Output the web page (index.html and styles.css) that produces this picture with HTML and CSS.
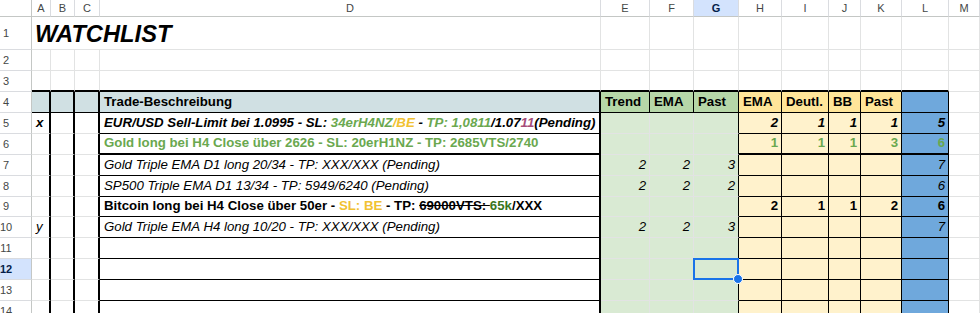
FILE: index.html
```html
<!DOCTYPE html>
<html lang="de">
<head>
<meta charset="utf-8">
<title>Watchlist</title>
<link rel="stylesheet" href="styles.css">
</head>
<body>
<div class="sheet">
  <!-- column headers -->
  <div class="x ch corner"></div>
  <div class="x ch">A</div><div class="x ch">B</div><div class="x ch">C</div><div class="x ch">D</div>
  <div class="x ch">E</div><div class="x ch">F</div><div class="x ch chsel">G</div><div class="x ch">H</div>
  <div class="x ch">I</div><div class="x ch">J</div><div class="x ch">K</div><div class="x ch">L</div><div class="x ch">M</div>

  <!-- row 1 -->
  <div class="x rh">1</div>
  <div class="x title">WATCHLIST</div>
  <div class="x"></div><div class="x"></div><div class="x"></div><div class="x"></div><div class="x"></div>
  <div class="x"></div><div class="x"></div><div class="x"></div><div class="x"></div>

  <!-- row 2 -->
  <div class="x rh">2</div>
  <div class="x"></div><div class="x"></div><div class="x"></div><div class="x"></div><div class="x"></div><div class="x"></div>
  <div class="x"></div><div class="x"></div><div class="x"></div><div class="x"></div><div class="x"></div><div class="x"></div><div class="x"></div>

  <!-- row 3 -->
  <div class="x rh">3</div>
  <div class="x top"></div><div class="x top"></div><div class="x top"></div><div class="x top"></div><div class="x top"></div><div class="x top"></div>
  <div class="x top"></div><div class="x top"></div><div class="x top"></div><div class="x top"></div><div class="x top"></div><div class="x top"></div><div class="x"></div>

  <!-- row 4 -->
  <div class="x rh">4</div>
  <div class="x hd hc ac"></div><div class="x hd hc ac"></div><div class="x hd hc ac"></div>
  <div class="x hd hc d">Trade-Beschreibung</div>
  <div class="x hd hg">Trend</div><div class="x hd hg">EMA</div><div class="x hd hg">Past</div>
  <div class="x hd hy">EMA</div><div class="x hd hy">Deutl.</div><div class="x hd hy">BB</div><div class="x hd hy">Past</div>
  <div class="x hd bl"></div>
  <div class="x"></div>

  <!-- row 5 -->
  <div class="x rh">5</div>
  <div class="x ac bi">x</div><div class="x ac"></div><div class="x ac"></div>
  <div class="x d bi"><span>EUR/USD Sell-Limit bei 1.0995 - SL:&nbsp;</span><span class="gn">34erH4NZ</span><span class="or">/BE</span><span>&nbsp;-&nbsp;</span><span class="gn">TP: 1,0811</span><span>/1.07</span><span class="pu">11</span><span>(Pending)</span></div>
  <div class="x gr"></div><div class="x gr"></div><div class="x gr gk"></div>
  <div class="x yl n bi">2</div><div class="x yl n bi">1</div><div class="x yl n bi">1</div><div class="x yl n bi">1</div>
  <div class="x bl n bi">5</div>
  <div class="x"></div>

  <!-- row 6 -->
  <div class="x rh">6</div>
  <div class="x ac"></div><div class="x ac"></div><div class="x ac"></div>
  <div class="x d b2 b gn">Gold long bei H4 Close über 2626 - SL: 20erH1NZ - TP: 2685VTS/2740</div>
  <div class="x gr"></div><div class="x gr"></div><div class="x gr gk"></div>
  <div class="x yl b2 n b gn">1</div><div class="x yl b2 n b gn">1</div><div class="x yl b2 n b gn">1</div><div class="x yl b2 n b gn">3</div>
  <div class="x bl b2 n b gn">6</div>
  <div class="x"></div>

  <!-- row 7 -->
  <div class="x rh">7</div>
  <div class="x ac"></div><div class="x ac"></div><div class="x ac"></div>
  <div class="x d i">Gold Triple EMA D1 long 20/34 - TP: XXX/XXX (Pending)</div>
  <div class="x gr n i">2</div><div class="x gr n i">2</div><div class="x gr gk n i">3</div>
  <div class="x yl"></div><div class="x yl"></div><div class="x yl"></div><div class="x yl"></div>
  <div class="x bl n i">7</div>
  <div class="x"></div>

  <!-- row 8 -->
  <div class="x rh">8</div>
  <div class="x ac"></div><div class="x ac"></div><div class="x ac"></div>
  <div class="x d i">SP500 Triple EMA D1 13/34 - TP: 5949/6240 (Pending)</div>
  <div class="x gr n i">2</div><div class="x gr n i">2</div><div class="x gr gk n i">2</div>
  <div class="x yl"></div><div class="x yl"></div><div class="x yl"></div><div class="x yl"></div>
  <div class="x bl n i">6</div>
  <div class="x"></div>

  <!-- row 9 -->
  <div class="x rh">9</div>
  <div class="x ac"></div><div class="x ac"></div><div class="x ac"></div>
  <div class="x d b"><span>Bitcoin long bei H4 Close über 50er -&nbsp;</span><span class="or">SL: BE</span><span>&nbsp;- TP:&nbsp;</span><s>69000VTS:&nbsp;</s><span class="dg">65k</span><span>/XXX</span></div>
  <div class="x gr"></div><div class="x gr"></div><div class="x gr gk"></div>
  <div class="x yl n b">2</div><div class="x yl n b">1</div><div class="x yl n b">1</div><div class="x yl n b">2</div>
  <div class="x bl n b">6</div>
  <div class="x"></div>

  <!-- row 10 -->
  <div class="x rh">10</div>
  <div class="x ac i">y</div><div class="x ac"></div><div class="x ac"></div>
  <div class="x d i">Gold Triple EMA H4 long 10/20 - TP: XXX/XXX (Pending)</div>
  <div class="x gr n i">2</div><div class="x gr n i">2</div><div class="x gr gk n i">3</div>
  <div class="x yl"></div><div class="x yl"></div><div class="x yl"></div><div class="x yl"></div>
  <div class="x bl n i">7</div>
  <div class="x"></div>

  <!-- row 11 -->
  <div class="x rh">11</div>
  <div class="x ac"></div><div class="x ac"></div><div class="x ac"></div>
  <div class="x d"></div>
  <div class="x gr"></div><div class="x gr"></div><div class="x gr gk"></div>
  <div class="x yl"></div><div class="x yl"></div><div class="x yl"></div><div class="x yl"></div>
  <div class="x bl"></div>
  <div class="x"></div>

  <!-- row 12 -->
  <div class="x rh rhsel">12</div>
  <div class="x ac"></div><div class="x ac"></div><div class="x ac"></div>
  <div class="x d"></div>
  <div class="x gr"></div><div class="x gr"></div><div class="x gr gk active"></div>
  <div class="x yl"></div><div class="x yl"></div><div class="x yl"></div><div class="x yl"></div>
  <div class="x bl"></div>
  <div class="x"></div>

  <!-- row 13 -->
  <div class="x rh">13</div>
  <div class="x ac"></div><div class="x ac"></div><div class="x ac"></div>
  <div class="x d"></div>
  <div class="x gr"></div><div class="x gr"></div><div class="x gr gk"></div>
  <div class="x yl"></div><div class="x yl"></div><div class="x yl"></div><div class="x yl"></div>
  <div class="x bl"></div>
  <div class="x"></div>

  <!-- row 14 -->
  <div class="x rh">14</div>
  <div class="x ac"></div><div class="x ac"></div><div class="x ac"></div>
  <div class="x d"></div>
  <div class="x gr"></div><div class="x gr"></div><div class="x gr gk"></div>
  <div class="x yl"></div><div class="x yl"></div><div class="x yl"></div><div class="x yl"></div>
  <div class="x bl"></div>
  <div class="x"></div>
</div>
</body>
</html>
```

FILE: styles.css
```css
* { box-sizing: border-box; margin: 0; padding: 0; }

body {
  width: 980px;
  height: 313px;
  overflow: hidden;
  background: #fff;
  font-family: "Liberation Sans", Arial, sans-serif;
}

.sheet {
  display: grid;
  grid-template-columns: 32px 19px 24px 25px 501px 49px 44px 45px 43px 47px 32px 41px 47px 1fr;
  grid-template-rows: 17px 33px 21px 21px 21px 21px 21px 21px 21px 20px 21px 21px 21px 21px 21px;
  width: 980px;
}

.x {
  border-right: 1px solid #e2e3e3;
  border-bottom: 1px solid #e2e3e3;
  font-size: 13.25px;
  line-height: 15px;
  color: #000;
  display: flex;
  align-items: flex-end;
  padding: 0 3px 3px 4px;
  white-space: nowrap;
  min-width: 0;
}

/* headers */
.ch {
  font-size: 11px;
  color: #444746;
  justify-content: center;
  align-items: center;
  padding: 0;
  border-bottom: 1px solid #c4c7c5;
  border-right: 1px solid #dadce0;
}
.corner { border-right: 1px solid #c4c7c5; }
.chsel { background: #d3e3fd; color: #041e49; font-weight: bold; }

.rh {
  font-size: 11px;
  color: #444746;
  justify-content: center;
  align-items: center;
  padding: 0 19px 0 0;
  border-right: 1px solid #c4c7c5;
  border-bottom: 1px solid #dadce0;
}
.rhsel { background: #d3e3fd; color: #041e49; font-weight: bold; }

.title {
  grid-column: span 4;
  font-size: 23.7px;
  line-height: 26px;
  font-weight: bold;
  font-style: italic;
  padding: 0 0 2px 3px;
}

.top { border-bottom: 2px solid #000; }

/* table area */
.ac { border-right: 2px solid #000; }
.d { border-right: 2px solid #000; border-bottom: 1px solid #000; }
.hd { border-right: 1px solid #000; border-bottom: 1px solid #000; font-weight: bold; }
.hd.ac, .hd.d { border-right: 2px solid #000; }
.hc { background: #d0e0e3; }
.hg { background: #b6d7a8; }
.hy { background: #ffe599; }

.gr { background: #d9ead3; }
.gk { border-right: 1px solid #000; }
.yl { background: #fff2cc; border-right: 1px solid #000; border-bottom: 1px solid #000; }
.bl { background: #6fa8dc; border-right: 1px solid #000; border-bottom: 1px solid #000; }
.b2 { border-bottom: 2px solid #000; }

.n { justify-content: flex-end; padding-right: 3px; }

.b { font-weight: bold; }
.i { font-style: italic; }
.bi { font-weight: bold; font-style: italic; }

.gn { color: #6aa84f; }
.or { color: #f1c232; }
.pu { color: #a64d79; }
.dg { color: #38761d; }

/* active cell selection */
.active { position: relative; }
.active::before {
  content: "";
  position: absolute;
  left: -1px;
  top: -1px;
  right: -1px;
  bottom: -1px;
  border: 2px solid #1a73e8;
}
.active::after {
  content: "";
  position: absolute;
  right: -5px;
  bottom: -5px;
  width: 8px;
  height: 8px;
  border-radius: 50%;
  background: #1a73e8;
  border: 1px solid #fff;
  z-index: 2;
}
```
